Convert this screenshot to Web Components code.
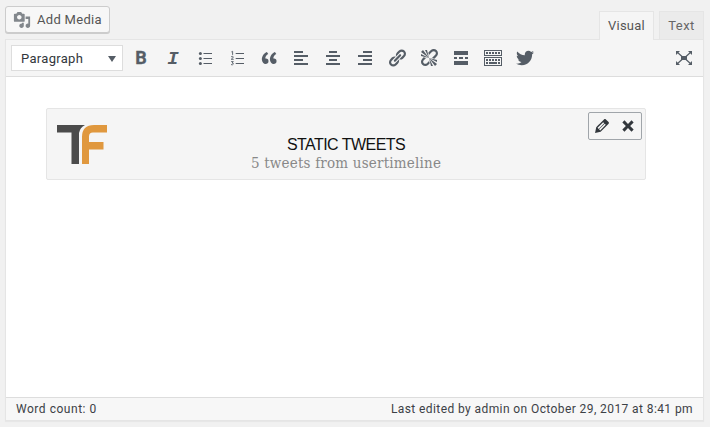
<!DOCTYPE html>
<html lang="en"><head><meta charset="utf-8"><title>Post editor</title>
<style>html,body{margin:0;height:100%;overflow:hidden;background:#f1f1f1;font-family:Roboto,"Liberation Sans",sans-serif;font-size:13px}</style></head>
<body><post-editor></post-editor>
<script>
const ICONS={
media:'<path d="M13 11V4c0-.55-.45-1-1-1h-1.67L9 1H5L3.67 3H2c-.55 0-1 .45-1 1v7c0 .55.45 1 1 1h10c.55 0 1-.45 1-1zM7 4.5c1.38 0 2.5 1.12 2.5 2.5S8.38 9.5 7 9.5 4.5 8.38 4.5 7 5.62 4.5 7 4.5zM14 6h5v10.5c0 1.38-1.12 2.5-2.5 2.5S14 17.88 14 16.5s1.12-2.5 2.5-2.5c.17 0 .34.02.5.05V9h-3V6zm-4 8.05V13h2v3.5c0 1.38-1.12 2.5-2.5 2.5S7 17.88 7 16.5 8.12 14 9.5 14c.17 0 .34.02.5.05z"/>',
bullets:'<circle cx="5.4" cy="5.4" r="1.5"/><circle cx="5.4" cy="10.4" r="1.5"/><circle cx="5.4" cy="15.4" r="1.5"/><path d="M8.5 5H17v1H8.5zM8.5 10H17v1H8.5zM8.5 15H17v1H8.5z"/>',
numbers:'<path d="M8.7 5H17v1H8.7zM8.7 10H17v1H8.7zM8.7 15H17v1H8.7z"/><path fill="none" stroke="currentColor" stroke-width=".9" d="M4.4 3.9l1.2-.6v3.6M4.1 8.8q2-1.2 2.2.2q0 .8-2.1 2.3h2.5M4.1 13.6h2.2l-1.2 1.4q1.5 0 1.3 1.1q-.5 1.1-2.4.5"/>',
quote:'<path d="M9.49 13.22c0-.74-.2-1.38-.61-1.9-.62-.78-1.83-.88-2.53-.72-.29-1.65 1.11-3.75 2.92-4.65L7.88 4c-2.73 1.3-5.42 4.28-4.96 8.05C3.21 14.43 4.59 16 6.54 16c.85 0 1.56-.25 2.12-.75s.83-1.18.83-2.03zm8.05 0c0-.74-.2-1.38-.61-1.9-.63-.78-1.83-.88-2.53-.72-.29-1.65 1.11-3.75 2.92-4.65L15.93 4c-2.73 1.3-5.41 4.28-4.95 8.05.29 2.38 1.66 3.95 3.61 3.95.85 0 1.56-.25 2.12-.75s.83-1.18.83-2.03z"/>',
left:'<path d="M3 3h9v2H3zM3 7h14v2H3zM3 11h9v2H3zM3 15h14v2H3z"/>',
center:'<path d="M6 3h8v2H6zM3 7h14v2H3zM6 11h8v2H6zM3 15h14v2H3z"/>',
right:'<path d="M8 3h9v2H8zM3 7h14v2H3zM8 11h9v2H8zM3 15h14v2H3z"/>',
link:'<path d="M17.74 2.76c1.68 1.69 1.68 4.41 0 6.1l-1.53 1.52c-1.12 1.12-2.7 1.47-4.14 1.09l2.62-2.61.76-.77.76-.76c.84-.84.84-2.2 0-3.04-.84-.85-2.2-.85-3.04 0l-.77.76-3.38 3.38c-.37-1.44-.02-3.02 1.1-4.14l1.52-1.53c1.69-1.68 4.42-1.68 6.1 0zM8.59 13.43l5.34-5.34c.42-.42.42-1.1 0-1.52-.44-.43-1.13-.39-1.53 0l-5.33 5.34c-.42.42-.42 1.1 0 1.52.44.43 1.13.39 1.52 0zm-.76 2.29l4.14-4.15c.38 1.44.03 3.02-1.09 4.14l-1.52 1.53c-1.69 1.68-4.41 1.68-6.1 0-1.68-1.68-1.68-4.42 0-6.1l1.53-1.52c1.12-1.12 2.7-1.47 4.14-1.1l-4.14 4.15c-.85.84-.85 2.2 0 3.05.84.84 2.2.84 3.04 0z"/>',
unlink:'<path d="M17.74 2.26c1.68 1.69 1.68 4.41 0 6.1l-1.53 1.52c-.32.33-.69.58-1.08.77L13 10l1.69-1.64.76-.77.76-.76c.84-.84.84-2.2 0-3.04-.84-.85-2.2-.85-3.04 0l-.77.76-.76.76L10 7l-.65-2.14c.19-.38.44-.75.77-1.07l1.52-1.53c1.69-1.68 4.42-1.68 6.1 0zM2 4l8 6-6-8zm4-2l4 8-2-8H6zM2 6l8 4-8-2V6zm7.36 7.69L10 13l.74 2.35-1.38 1.39c-1.69 1.68-4.41 1.68-6.1 0-1.68-1.68-1.68-4.42 0-6.1l1.39-1.38L7 10l-.69.64-1.52 1.53c-.85.84-.85 2.2 0 3.04.84.85 2.2.85 3.04 0zM18 16l-8-6 6 8zm-4 2l-4-8 2 8h2zm4-4l-8-4 8 2v2z"/>',
more:'<path d="M17 7V3H3v4h14zM6 11V9H3v2h3zm6 0V9H8v2h4zm5 0V9h-3v2h3zm0 6v-4H3v4h14z"/>',
keyboard:'<path fill-rule="evenodd" d="M1 2h18v6H1zM2 3v4h16V3zM1 9h18v9H1zM2 10v7h16v-7z"/><path d="M3 4h2v2H3zM6 4h2v2H6zM9 4h2v2H9zM12 4h2v2h-2zM15 4h2v2h-2zM3 11h2v2H3zM6 11h2v2H6zM9 11h2v2H9zM12 11h2v2h-2zM15 11h2v2h-2zM3 14h2v2H3zM6 14h8v2H6zM15 14h2v2h-2z"/>',
bird:'<path d="M18.94 4.46c-.49.73-1.11 1.38-1.83 1.9.01.15.01.31.01.47 0 4.85-3.69 10.44-10.43 10.44-2.07 0-4-.61-5.63-1.65.29.03.58.05.88.05 1.72 0 3.3-.59 4.55-1.57-1.6-.03-2.95-1.09-3.42-2.55.22.04.45.07.69.07.33 0 .66-.05.96-.13-1.67-.34-2.94-1.82-2.94-3.6v-.04c.5.27 1.06.44 1.66.46-.98-.66-1.63-1.78-1.63-3.06 0-.67.18-1.3.5-1.84 1.81 2.22 4.51 3.68 7.56 3.83-.06-.27-.1-.55-.1-.84 0-2.02 1.65-3.66 3.67-3.66 1.06 0 2.01.44 2.68 1.16.83-.17 1.62-.47 2.33-.88-.28.85-.86 1.57-1.62 2.02.75-.08 1.45-.28 2.11-.58z"/>',
expand:'<path d="M7 8h6v4H7zM2 3h4L2 7zM18 3v4l-4-4zM2 17v-4l4 4zM18 17h-4l4-4z"/><path stroke="currentColor" stroke-width="1.2" d="M3 4l5 4.5M17 4l-5 4.5M3 16l5-4.5M17 16l-5-4.5"/>',
edit:'<path d="M13.89 3.39l2.71 2.72c.46.46.42 1.24.03 1.64l-8.01 8.02-5.56 1.16 1.16-5.58s7.6-7.63 7.99-8.03c.39-.39 1.22-.39 1.68.07zm-2.73 2.79l-5.59 5.61 1.11 1.11 5.54-5.65zm-2.97 8.23l5.58-5.6-1.07-1.08-5.59 5.6z"/>',
close:'<path d="M12.12 10l3.53 3.53-2.12 2.12L10 12.12l-3.54 3.54-2.12-2.12L7.88 10 4.34 6.46l2.12-2.12L10 7.88l3.54-3.53 2.12 2.12z"/>'
};
const define=(name,html)=>customElements.define(name,class extends HTMLElement{
 constructor(){super();const t=document.createElement('template');t.innerHTML=html;
 this.attachShadow({mode:'open'}).append(t.content.cloneNode(true));}
});
customElements.define('ui-icon',class extends HTMLElement{
 connectedCallback(){if(this.shadowRoot)return;
 this.attachShadow({mode:'open'}).innerHTML=`<style>:host{display:block;width:var(--size,20px);height:var(--size,20px)}svg{display:block}</style><svg width="100%" height="100%" viewBox="0 0 20 20" fill="currentColor">${ICONS[this.getAttribute('name')]}</svg>`;}
});
define('media-button',`<style>:host{display:flex;align-items:center;box-sizing:border-box;width:105px;height:27px;border:1px solid #ccc;border-radius:3px;background:#f7f7f7;box-shadow:0 1px 0 #ccc;color:#555;padding-left:7px;gap:6px;letter-spacing:.3px}ui-icon{--size:18px;color:#82878c}span{margin-top:-1px}</style><ui-icon name="media"></ui-icon><span><slot></slot></span>`);
define('editor-tab',`<style>:host{display:block;box-sizing:border-box;height:28px;border:1px solid #e5e5e5;border-bottom:0;background:#ebebeb;color:#666;font-size:13px;line-height:27px;text-align:center;width:45px;letter-spacing:.4px}:host([active]){width:55px;height:29px;background:#f5f5f5;color:#555;margin-bottom:-1px;position:relative;letter-spacing:.25px}</style><slot></slot>`);
define('format-select',`<style>:host{display:flex;align-items:center;justify-content:space-between;box-sizing:border-box;width:112px;height:26px;border:1px solid #ddd;background:#fff;color:#32373c;padding:0 6px 0 9px;letter-spacing:.31px}i{border:4.5px solid transparent;border-top:6px solid #555d66;border-bottom:0;margin-top:1px}</style><span><slot></slot></span><i></i>`);
define('format-toolbar',`<style>:host{display:flex;align-items:center;box-sizing:border-box;height:37px;padding:0 9px 0 5px;background:#f5f5f5;border-bottom:1px solid #ddd;color:#555d66}.tools{display:flex;gap:12px;margin-left:8px}.tools>*{flex:none}.g{width:20px;height:20px;line-height:20px;text-align:center;font-size:18px;font-weight:700;-webkit-text-stroke:.3px}.i{font-family:"Liberation Mono",monospace;font-style:italic;font-size:19px;line-height:22px;-webkit-text-stroke:0}.full{margin-left:auto}</style>
<format-select>Paragraph</format-select><div class="tools"><span class="g">B</span><span class="g i">I</span>${['bullets','numbers','quote','left','center','right','link','unlink','more','keyboard','bird'].map(n=>`<ui-icon name="${n}"></ui-icon>`).join('')}</div><ui-icon class="full" name="expand"></ui-icon>`);
define('card-actions',`<style>:host{display:flex;gap:6px;box-sizing:border-box;width:54px;height:28px;padding:3px;border:1px solid #a0a5aa;border-radius:2px;background:#f5f5f5;color:#32373c}</style><ui-icon name="edit"></ui-icon><ui-icon name="close"></ui-icon>`);
define('tweet-card',`<style>:host{display:grid;justify-items:center;align-content:start;position:relative;box-sizing:border-box;width:600px;height:72px;border:1px solid #e5e5e5;border-radius:2px;background:#f5f5f5;padding-top:26px}svg{position:absolute;left:9px;top:15px}.t{font:16px/19px "Liberation Sans",sans-serif;letter-spacing:-.55px;color:#111}.s{font:15px/19px "DejaVu Serif",serif;font-stretch:condensed;letter-spacing:.2px;color:#888}card-actions{position:absolute;right:3px;top:3px}</style>
<svg width="52" height="42" viewBox="0 0 52 42"><path fill="#4b4b4b" d="M1 1h28q-5 2.5-6 8v31h-7.5V8.5H1z"/><path fill="#e0983e" d="M51 1v7.5H37q-4 0-4 4V18h14.5v7.5H33V40h-7V13Q26 1 38 1z"/></svg>
<span class="t"><slot name="title"></slot></span><span class="s"><slot></slot></span><card-actions></card-actions>`);
define('status-bar',`<style>:host{display:flex;justify-content:space-between;align-items:center;box-sizing:border-box;height:23px;padding:0 10px;border-top:1px solid #ddd;background:#f7f7f7;color:#3c4146;font-size:12px;letter-spacing:.41px}.c{letter-spacing:.53px}</style><span class="c"><slot name="count"></slot></span><span class="e"><slot></slot></span>`);
define('post-editor',`<style>:host{display:flex;flex-direction:column;padding:6px 6px 0 5px}header{display:flex;justify-content:space-between;height:33px}.tabs{display:flex;align-items:flex-end;gap:5px}main{display:flex;flex-direction:column;box-sizing:border-box;height:382px;border:1px solid #e5e5e5;box-shadow:0 1px 1px rgba(0,0,0,.04);background:#fff}.body{flex:1;padding:31px 40px}</style>
<header><media-button>Add Media</media-button><div class="tabs"><editor-tab active>Visual</editor-tab><editor-tab>Text</editor-tab></div></header>
<main><format-toolbar></format-toolbar><div class="body"><tweet-card><span slot="title">STATIC TWEETS</span>5 tweets from usertimeline</tweet-card></div><status-bar><span slot="count">Word count: 0</span>Last edited by admin on October 29, 2017 at 8:41 pm</status-bar></main>`);
</script></body></html>
